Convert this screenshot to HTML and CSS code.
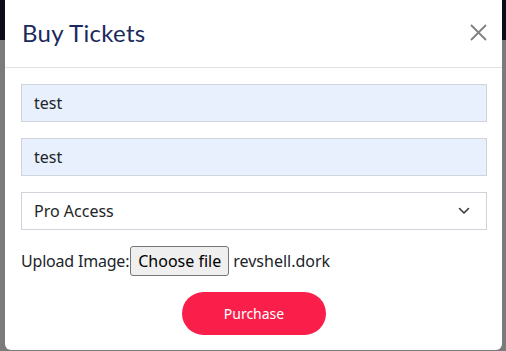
FILE: index.html
```html
<!DOCTYPE html>
<html>
<head>
<meta charset="utf-8">
<link rel="stylesheet" href="styles.css">
</head>
<body>
<div class="backdrop">
  <div class="modal">
    <div class="modal-header">
      <h1 class="title">Buy Tickets</h1>
      <span class="close" aria-label="Close">
        <svg width="17" height="17" viewBox="0 0 17 17"><path d="M1 1L16 16M16 1L1 16" stroke="#808080" stroke-width="1.8" fill="none"/></svg>
      </span>
    </div>
    <div class="modal-body">
      <div class="field autofill">test</div>
      <div class="field autofill">test</div>
      <div class="field select">
        <span>Pro Access</span>
        <svg class="chev" width="12" height="8" viewBox="0 0 12 8"><path d="M1.5 1.5L6 6L10.5 1.5" stroke="#343a40" stroke-width="1.6" fill="none" stroke-linecap="round" stroke-linejoin="round"/></svg>
      </div>
      <div class="upload">
        <span class="upload-label">Upload Image:</span>
        <span class="file-btn">Choose file</span>
        <span class="file-name">revshell.dork</span>
      </div>
      <div class="actions">
        <span class="purchase">Purchase</span>
      </div>
    </div>
  </div>
</div>
</body>
</html>
```
FILE: styles.css
```css
html, body {
  margin: 0;
  padding: 0;
}
body {
  font-family: "Noto Sans", "Open Sans", sans-serif;
  color: #212529;
}
.backdrop {
  width: 506px;
  height: 351px;
  background: linear-gradient(to bottom, #0c0c18 0, #0c0c18 40px, #7b7b7b 40px, #7b7b7b 100%);
  padding: 0 4px 0 5px;
  box-sizing: border-box;
  overflow: hidden;
}
.modal {
  width: 497px;
  height: 350px;
  background: #fff;
  border-radius: 0 0 6px 6px;
  box-sizing: border-box;
}
.modal-header {
  height: 68px;
  box-sizing: border-box;
  border-bottom: 1px solid #dee2e6;
  display: flex;
  align-items: center;
  justify-content: space-between;
  padding: 0 15px 2px 17px;
}
.title {
  margin: 0;
  font-family: "Lato", sans-serif;
  font-weight: 400;
  font-size: 24px;
  letter-spacing: 0.3px;
  line-height: 30px;
  color: #1b2a5c;
}
.close {
  display: flex;
  width: 17px;
  height: 17px;
}
.modal-body {
  padding: 16px 15px 15px 16px;
  display: flex;
  flex-direction: column;
  gap: 16px;
}
.field {
  height: 38px;
  box-sizing: border-box;
  border: 1px solid #ced4da;
  padding: 0 12px;
  font-size: 16px;
  display: flex;
  align-items: center;
  color: #212529;
}
.autofill {
  background: #e8f0fe;
}
.select {
  background: #fff;
  justify-content: space-between;
  padding-right: 16px;
}
.chev {
  display: block;
}
.upload {
  display: flex;
  align-items: center;
  height: 30px;
  font-size: 16px;
  color: #212529;
}
.upload-label {
  letter-spacing: -0.2px;
}
.file-btn {
  margin-left: 1px;
  height: 30px;
  box-sizing: border-box;
  border: 1px solid #767676;
  border-radius: 3px;
  background: #efefef;
  padding: 0 7px;
  display: flex;
  align-items: center;
  color: #000;
}
.file-name {
  margin-left: 4px;
}
.actions {
  display: flex;
  justify-content: center;
}
.purchase {
  width: 144px;
  height: 43px;
  border-radius: 22px;
  background: #fa1f4b;
  color: #fff;
  font-size: 14px;
  display: flex;
  align-items: center;
  justify-content: center;
}
```
